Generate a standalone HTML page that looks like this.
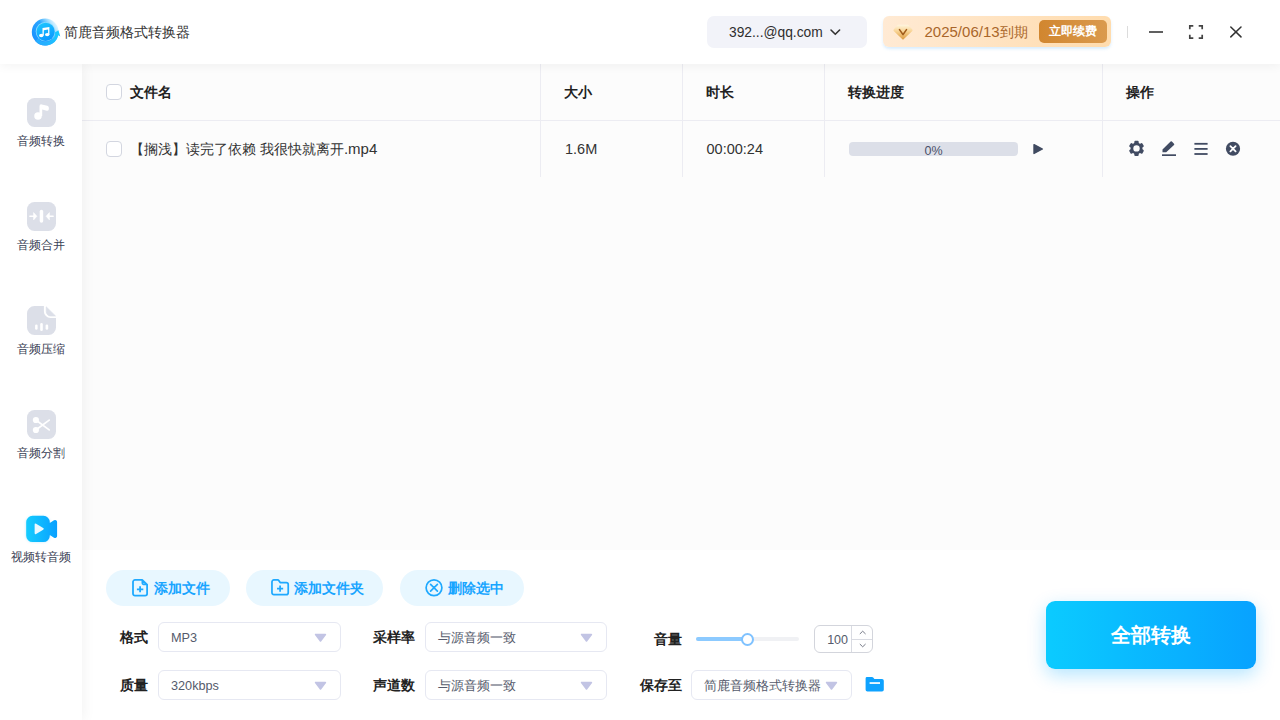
<!DOCTYPE html>
<html lang="zh">
<head>
<meta charset="utf-8">
<title>简鹿音频格式转换器</title>
<style>
*{box-sizing:border-box;margin:0;padding:0}
html,body{width:1280px;height:720px;overflow:hidden;background:#fcfcfc;font-family:"Liberation Sans",sans-serif;color:#333}
.abs{position:absolute}
svg{position:absolute;overflow:visible}
#app{position:relative;width:1280px;height:720px;overflow:hidden;background:#fcfcfc}
/* header */
#hdr{left:0;top:0;width:1280px;height:64px;background:#fff;box-shadow:0 2px 10px rgba(0,0,0,.05);z-index:5}
#title{left:64px;top:22px;font-size:14px;line-height:20px;color:#333;white-space:nowrap}
#acct{left:707px;top:16px;width:160px;height:32px;border-radius:7px;background:#f2f3f9}
#acct span{position:absolute;left:22px;top:7px;font-size:13.8px;line-height:20px;color:#2e2e2e;white-space:nowrap}
#vip{left:883px;top:16px;width:228px;height:31px;border-radius:6px;background:linear-gradient(90deg,#ffead4,#ffdcae);box-shadow:0 2px 3px rgba(170,215,250,.45)}
#vip .d{position:absolute;left:41.5px;top:5.5px;font-size:15px;line-height:20px;color:#a9662a;white-space:nowrap}
#vip .d b{font-weight:normal;font-size:14px}
#renew{left:156px;top:4px;width:68px;height:23px;border-radius:5px;background:linear-gradient(90deg,#d1862f,#da9a4e);color:#fff;font-size:12px;font-weight:bold;line-height:23px;text-align:center;white-space:nowrap}
/* sidebar */
#side{left:0;top:64px;width:82px;height:656px;background:#fff;z-index:3;box-shadow:2px 0 12px rgba(0,0,0,.05)}
.nav{left:0;width:82px;text-align:center;font-size:12px;line-height:16px;color:#3a4054;white-space:nowrap;z-index:4}
.ico{left:26.5px;width:29px;height:29px;border-radius:8px;background:#dcdfe8;z-index:4}
/* table */
#thead{left:82px;top:64px;width:1198px;height:57px;border-bottom:1px solid #ececf2}
.vsep{top:64px;width:1px;height:113px;background:#ececf2}
.th{top:83px;font-size:14px;font-weight:bold;line-height:18px;color:#222;white-space:nowrap}
.td{top:139px;font-size:14px;line-height:20px;color:#333;white-space:nowrap}
.td i{font-style:normal;font-size:15px}
.num{font-size:14.5px}
.cb{left:106px;width:16px;height:16px;border:1px solid #d3d6e0;border-radius:4px;background:#fff}
/* bottom */
#bot{left:82px;top:550px;width:1198px;height:170px;background:#fff}
.pill{top:570px;height:36px;border-radius:18px;background:#e8f7ff;color:#18a5ff;font-size:14px;font-weight:bold;line-height:36px;white-space:nowrap}
.pill span{position:absolute;top:0}
.lbl{font-size:14px;font-weight:bold;line-height:20px;color:#222;white-space:nowrap}
.sel{height:30px;border:1px solid #e6e8f2;border-radius:6px;background:#fff;font-size:13px;line-height:28px;color:#555b6c;white-space:nowrap}
.sel span{position:absolute;left:12px;top:1px}
.sel span.l{font-size:12.7px}
#go{left:1046px;top:601px;width:210px;height:68px;border-radius:9px;background:linear-gradient(90deg,#0bcbff,#08a2ff);box-shadow:0 6px 18px rgba(10,170,255,.30);color:#fff;font-size:20px;font-weight:bold;line-height:68px;text-align:center}
</style>
</head>
<body>
<div id="app">
  <div id="thead" class="abs"></div>
  <div class="abs vsep" style="left:540px"></div>
  <div class="abs vsep" style="left:682px"></div>
  <div class="abs vsep" style="left:824px"></div>
  <div class="abs vsep" style="left:1102px"></div>
  <div class="abs cb" style="top:84px"></div>
  <div class="abs th" style="left:130px">文件名</div>
  <div class="abs th" style="left:564px">大小</div>
  <div class="abs th" style="left:706px">时长</div>
  <div class="abs th" style="left:848px">转换进度</div>
  <div class="abs th" style="left:1126px">操作</div>
  <div class="abs cb" style="top:141px"></div>
  <div class="abs td" style="left:130px">【搁浅】读完了依赖 我很快就离开<i>.mp4</i></div>
  <div class="abs td num" style="left:565px">1.6M</div>
  <div class="abs td num" style="left:706.5px">00:00:24</div>
  <!-- progress -->
  <div class="abs" style="left:849px;top:142px;width:169px;height:14px;border-radius:4px;background:#dcdfe8"></div>
  <div class="abs" style="left:849px;top:144px;width:169px;text-align:center;font-size:12.5px;line-height:15px;color:#4a5068">0%</div>
  <svg style="left:1031px;top:141px" width="16" height="16" viewBox="0 0 16 16"><path d="M3 3.6 L11.4 8 L3 12.4 Z" fill="#404a60" stroke="#404a60" stroke-width="1.4" stroke-linejoin="round"/></svg>
  <!-- actions -->
  <svg style="left:1128px;top:140px" width="17" height="17" viewBox="0 0 17 17"><g transform="translate(8.5,8.4)" fill="#414b62"><circle r="5.9"/><rect x="-2.2" y="-7.6" width="4.4" height="4" rx="1.1" transform="rotate(0)"/><rect x="-2.2" y="-7.6" width="4.4" height="4" rx="1.1" transform="rotate(60)"/><rect x="-2.2" y="-7.6" width="4.4" height="4" rx="1.1" transform="rotate(120)"/><rect x="-2.2" y="-7.6" width="4.4" height="4" rx="1.1" transform="rotate(180)"/><rect x="-2.2" y="-7.6" width="4.4" height="4" rx="1.1" transform="rotate(240)"/><rect x="-2.2" y="-7.6" width="4.4" height="4" rx="1.1" transform="rotate(300)"/><circle r="3.2" fill="#fcfcfc"/></g></svg>
  <svg style="left:1160px;top:140px" width="17" height="17" viewBox="0 0 17 17"><path d="M2.5 12.2 V9.6 L10.6 1.6 a0.9 0.9 0 0 1 1.3 0 L14 3.7 a0.9 0.9 0 0 1 0 1.3 L6.2 12.2 Z" fill="#414b62"/><rect x="2" y="14.3" width="14" height="1.7" fill="#414b62"/></svg>
  <svg style="left:1193px;top:140px" width="17" height="17" viewBox="0 0 17 17"><g fill="#414b62"><rect x="1.4" y="2.9" width="13.2" height="1.8"/><rect x="1.4" y="8" width="13.2" height="1.8"/><rect x="1.4" y="13.1" width="13.2" height="1.8"/></g></svg>
  <svg style="left:1225px;top:140px" width="17" height="17" viewBox="0 0 17 17"><circle cx="8" cy="8.75" r="7.1" fill="#414b62"/><path d="M5.4 6.15 L10.6 11.35 M10.6 6.15 L5.4 11.35" stroke="#fff" stroke-width="1.8" stroke-linecap="round"/></svg>

  <div id="bot" class="abs"></div>
  <div class="abs pill" style="left:106px;width:124px"><svg style="left:26px;top:9px" width="17" height="18" viewBox="0 0 17 19" preserveAspectRatio="none"><path d="M3 1 H10.2 L15.1 5.9 V15.6 a2 2 0 0 1 -2 2 H3 a2 2 0 0 1 -2 -2 V3 a2 2 0 0 1 2 -2 Z M10.4 1.3 V4.6 a1 1 0 0 0 1 1 H14.8" fill="none" stroke="#1fa9ff" stroke-width="1.8" stroke-linejoin="round"/><path d="M4.9 10.9 H11.3 M8.1 7.7 V14.1" stroke="#1fa9ff" stroke-width="1.8"/></svg><span style="left:48px">添加文件</span></div>
  <div class="abs pill" style="left:246px;width:137px"><svg style="left:25px;top:9px" width="18.2" height="16.6" viewBox="0 0 19 17" preserveAspectRatio="none"><path d="M3 1 H7 a1.6 1.6 0 0 1 1.3 .7 L9.6 3.6 H16 a2 2 0 0 1 2 2 V14 a2 2 0 0 1 -2 2 H3 a2 2 0 0 1 -2 -2 V3 a2 2 0 0 1 2 -2 Z" fill="none" stroke="#1fa9ff" stroke-width="1.8" stroke-linejoin="round"/><path d="M6.3 9.8 H12.7 M9.5 6.6 V13" stroke="#1fa9ff" stroke-width="1.8"/></svg><span style="left:48px">添加文件夹</span></div>
  <div class="abs pill" style="left:400px;width:124px"><svg style="left:25px;top:9px" width="19" height="19" viewBox="0 0 19 19"><circle cx="9" cy="8.8" r="7.9" fill="none" stroke="#1fa9ff" stroke-width="1.7"/><path d="M5.6 5.4 L12.4 12.2 M12.4 5.4 L5.6 12.2" stroke="#1fa9ff" stroke-width="1.7" stroke-linecap="round"/></svg><span style="left:48px">删除选中</span></div>

  <div class="abs lbl" style="left:120px;top:627px">格式</div>
  <div class="abs sel" style="left:158px;top:622px;width:183px"><span class="l">MP3</span><svg style="left:155px;top:10px" width="13" height="10" viewBox="0 0 13 10"><path d="M1.6 1.5 H11.4 L6.5 8 Z" fill="#c2c4e4" stroke="#c2c4e4" stroke-width="1.6" stroke-linejoin="round"/></svg></div>
  <div class="abs lbl" style="left:120px;top:675px">质量</div>
  <div class="abs sel" style="left:158px;top:670px;width:183px"><span class="l">320kbps</span><svg style="left:155px;top:10px" width="13" height="10" viewBox="0 0 13 10"><path d="M1.6 1.5 H11.4 L6.5 8 Z" fill="#c2c4e4" stroke="#c2c4e4" stroke-width="1.6" stroke-linejoin="round"/></svg></div>
  <div class="abs lbl" style="left:373px;top:627px">采样率</div>
  <div class="abs sel" style="left:425px;top:622px;width:182px"><span>与源音频一致</span><svg style="left:154px;top:10px" width="13" height="10" viewBox="0 0 13 10"><path d="M1.6 1.5 H11.4 L6.5 8 Z" fill="#c2c4e4" stroke="#c2c4e4" stroke-width="1.6" stroke-linejoin="round"/></svg></div>
  <div class="abs lbl" style="left:373px;top:675px">声道数</div>
  <div class="abs sel" style="left:425px;top:670px;width:182px"><span>与源音频一致</span><svg style="left:154px;top:10px" width="13" height="10" viewBox="0 0 13 10"><path d="M1.6 1.5 H11.4 L6.5 8 Z" fill="#c2c4e4" stroke="#c2c4e4" stroke-width="1.6" stroke-linejoin="round"/></svg></div>
  <div class="abs lbl" style="left:654px;top:629px">音量</div>
  <div class="abs lbl" style="left:640px;top:675px">保存至</div>
  <div class="abs sel" style="left:691px;top:670px;width:161px"><span>简鹿音频格式转换器</span><svg style="left:133px;top:10px" width="13" height="10" viewBox="0 0 13 10"><path d="M1.6 1.5 H11.4 L6.5 8 Z" fill="#c2c4e4" stroke="#c2c4e4" stroke-width="1.6" stroke-linejoin="round"/></svg></div>
  <div class="abs" style="left:696px;top:637px;width:103px;height:4px;border-radius:2px;background:#f0f1f4"></div>
  <div class="abs" style="left:696px;top:637px;width:52px;height:4px;border-radius:2px;background:#8ccaff"></div>
  <div class="abs" style="left:741px;top:632.5px;width:13px;height:13px;border-radius:50%;background:#fff;border:2px solid #7fc2ff"></div>
  <div class="abs" style="left:814px;top:625px;width:59px;height:28px;border-radius:6px;border:1px solid #d3d5dc;background:#fff"></div>
  <div class="abs" style="left:851px;top:626px;width:1px;height:26px;background:#d9dbe2"></div>
  <div class="abs" style="left:852px;top:639px;width:20px;height:1px;background:#d9dbe2"></div>
  <div class="abs" style="left:815px;top:631px;width:33px;text-align:right;font-size:12.5px;line-height:18px;color:#555b6c">100</div>
  <svg style="left:858px;top:629px" width="10" height="20" viewBox="0 0 10 20"><path d="M1.8 5 L4.7 2.2 L7.6 5 M1.8 15 L4.7 17.8 L7.6 15" fill="none" stroke="#777b88" stroke-width="1"/></svg>
  <svg style="left:865px;top:676px" width="20" height="17" viewBox="0 0 20 17"><path d="M2 1 H7 a1.5 1.5 0 0 1 1.2 .6 L9.4 3 H17 a1.8 1.8 0 0 1 1.8 1.8 V13.8 a1.8 1.8 0 0 1 -1.8 1.8 H2.4 a1.8 1.8 0 0 1 -1.8 -1.8 V2.4 A1.4 1.4 0 0 1 2 1 Z" fill="#0ea2ff"/><rect x="4.6" y="6.2" width="10.4" height="1.7" fill="#fff"/></svg>
  <div id="go" class="abs">全部转换</div>

  <div id="side" class="abs"></div>
  <div id="hdr" class="abs">
    <svg style="left:30px;top:17px" width="32" height="30" viewBox="0 0 32 30"><defs><linearGradient id="lg1" x1="0.1" y1="0.75" x2="0.95" y2="0.2"><stop offset="0" stop-color="#1b93ff"/><stop offset=".5" stop-color="#2ba6ff"/><stop offset=".8" stop-color="#a8e0ff"/><stop offset="1" stop-color="#eefaff"/></linearGradient><linearGradient id="lg2" x1="0.2" y1="0" x2="0.6" y2="1"><stop offset="0" stop-color="#1cc6ff"/><stop offset="1" stop-color="#0c98ff"/></linearGradient><linearGradient id="lg3" x1="0" y1="1" x2="1" y2="0"><stop offset="0" stop-color="#2aa4ff"/><stop offset=".6" stop-color="#1cc4ff"/><stop offset="1" stop-color="#17caff"/></linearGradient></defs><circle cx="15.2" cy="15" r="13.4" fill="url(#lg1)"/><path d="M5.5 24.2 A13.4 13.4 0 0 0 28.3 18.2 L30.3 19.6 L28.4 13.2 L23.8 16.2 L25.3 16.7 A10 10 0 0 1 8 21.8 Z" fill="url(#lg3)"/><circle cx="15.4" cy="14.6" r="9.7" fill="#8adcff"/><circle cx="15.6" cy="14.8" r="9.1" fill="url(#lg2)"/><g fill="#fff"><ellipse cx="11.3" cy="18.5" rx="2.2" ry="1.7"/><ellipse cx="17.2" cy="17.6" rx="2.2" ry="1.7"/><path d="M12.5 18.6 V10.9 L19.4 9.9 V17.7 H18.1 V12.6 L13.8 13.3 V18.6 Z"/></g></svg>
    <div id="title" class="abs">简鹿音频格式转换器</div>
    <div id="acct" class="abs"><span>392...@qq.com</span><svg style="left:123px;top:13.3px" width="11" height="7" viewBox="0 0 11 7"><path d="M1 1 L5.3 5.3 L9.6 1" fill="none" stroke="#333" stroke-width="1.6" stroke-linecap="round" stroke-linejoin="round"/></svg></div>
    <div class="abs" style="left:1127px;top:26px;width:1px;height:12px;background:#dcdcdc"></div>
    <svg style="left:1145px;top:22px" width="22" height="20" viewBox="0 0 22 20"><path d="M4 10 H18" stroke="#444" stroke-width="1.7"/></svg>
    <svg style="left:1185px;top:21px" width="22" height="22" viewBox="0 0 22 22"><path d="M4.8 8.3 V4.8 H8.3 M13.7 4.8 H17.2 V8.3 M17.2 13.7 V17.2 H13.7 M8.3 17.2 H4.8 V13.7" fill="none" stroke="#444" stroke-width="1.7"/></svg>
    <svg style="left:1225px;top:21px" width="22" height="22" viewBox="0 0 22 22"><path d="M5.8 6 L16 15.9 M16 6 L5.8 15.9" stroke="#333" stroke-width="1.5" stroke-linecap="round"/></svg>
    <div id="vip" class="abs"><svg style="left:10px;top:8px" width="20" height="16" viewBox="0 0 20 16"><defs><linearGradient id="gg" x1="0" y1="0" x2="0" y2="1"><stop offset="0" stop-color="#fff6e0"/><stop offset=".45" stop-color="#f8d393"/><stop offset="1" stop-color="#dc9c44"/></linearGradient></defs><path d="M5.2 0.8 H14.8 a1.2 1.2 0 0 1 .95 .45 L19.3 5.4 a1.2 1.2 0 0 1 -.05 1.5 L10.9 15 a1.2 1.2 0 0 1 -1.8 0 L.75 6.9 a1.2 1.2 0 0 1 -.05 -1.5 L4.25 1.25 a1.2 1.2 0 0 1 .95 -.45 Z" fill="url(#gg)"/><path d="M6.5 5.6 L10 10.6 L13.5 5.6" fill="none" stroke="#a05c1c" stroke-width="1.6" stroke-linecap="round" stroke-linejoin="round"/></svg><span class="d">2025/06/13<b>到期</b></span><div id="renew" class="abs">立即续费</div></div>
  </div>
  <svg style="left:26.5px;top:98.3px;z-index:4" width="29" height="29" viewBox="0 0 29 29"><rect width="29" height="29" rx="7.5" fill="#dcdfe8"/><circle cx="11" cy="18" r="3.75" fill="#fff"/><path d="M12.5 18 V8.3 a1.9 1.9 0 0 1 2.3 -1.85 l5.5 1.25 a2 2 0 0 1 1.55 1.95 v1.4 a1.7 1.7 0 0 1 -2.1 1.65 l-4.55 -1.1 V18 z" fill="#fff"/></svg>
  <div class="abs nav" style="top:133px">音频转换</div>
  <svg style="left:26.5px;top:202.3px;z-index:4" width="29" height="29" viewBox="0 0 29 29"><rect width="29" height="29" rx="7.5" fill="#dcdfe8"/><rect x="12.7" y="7.7" width="3.5" height="13" rx="1.75" fill="#fff"/><path d="M2.9 14.25 H7.5 M26.1 14.25 H21.5" stroke="#fff" stroke-width="1.6" stroke-linecap="round"/><path d="M6.6 10.6 L9.9 14.25 L6.6 17.9 Z M22.4 10.6 L19.1 14.25 L22.4 17.9 Z" fill="#fff" stroke="#fff" stroke-width="0.6" stroke-linejoin="round"/></svg>
  <div class="abs nav" style="top:237px">音频合并</div>
  <svg style="left:26.5px;top:306.3px;z-index:4" width="29" height="29" viewBox="0 0 29 29"><path d="M7.5 0 H16.9 V5.4 a6.6 6.6 0 0 0 6.6 6.6 H29 V21.5 a7.5 7.5 0 0 1 -7.5 7.5 H7.5 a7.5 7.5 0 0 1 -7.5 -7.5 V7.5 a7.5 7.5 0 0 1 7.5 -7.5 Z" fill="#dcdfe8"/><path d="M19.3 0.9 L28.4 9.9 H23.6 a4.3 4.3 0 0 1 -4.3 -4.3 Z" fill="#dcdfe8" stroke="#dcdfe8" stroke-width="0.8" stroke-linejoin="round"/><rect x="8.1" y="18.5" width="2.5" height="5.3" rx="1.25" fill="#fff"/><rect x="13.2" y="17.1" width="2.6" height="7.9" rx="1.3" fill="#fff"/><rect x="18.6" y="18.5" width="2.6" height="5.3" rx="1.3" fill="#fff"/></svg>
  <div class="abs nav" style="top:341px">音频压缩</div>
  <svg style="left:26.5px;top:410.3px;z-index:4" width="29" height="29" viewBox="0 0 29 29"><rect width="29" height="29" rx="7.5" fill="#dcdfe8"/><circle cx="8.9" cy="10" r="3.1" fill="#fff"/><circle cx="8.9" cy="20" r="3.1" fill="#fff"/><path d="M9.5 10.5 L22.2 19.9 M9.5 19.5 L22.2 10.1" stroke="#fff" stroke-width="1.7" stroke-linecap="round"/></svg>
  <div class="abs nav" style="top:445px">音频分割</div>
  <svg style="left:20px;top:510px;z-index:4" width="44" height="40" viewBox="0 0 44 40"><defs><linearGradient id="vg" x1="0" x2="1" y1="0" y2="0"><stop offset="0" stop-color="#14ccff"/><stop offset="1" stop-color="#09a0ff"/></linearGradient><filter id="vglow" x="-30%" y="-30%" width="160%" height="160%"><feGaussianBlur stdDeviation="1.6"/></filter></defs><rect x="6" y="6.5" width="24" height="25.5" rx="6.5" fill="#8fdcff" opacity=".55" filter="url(#vglow)"/><path d="M12.5 5.8 H23.5 a6.3 6.3 0 0 1 6.3 6.3 V13 L34 10.3 a2 2 0 0 1 3.1 1.7 V26 a2 2 0 0 1 -3.1 1.7 L29.8 25 V25.7 a6.3 6.3 0 0 1 -6.3 6.3 H12.5 a6.3 6.3 0 0 1 -6.3 -6.3 V12.1 a6.3 6.3 0 0 1 6.3 -6.3 Z" fill="url(#vg)"/><path d="M14.6 14.7 a1 1 0 0 1 1.5 -0.85 L23.2 18 a1 1 0 0 1 0 1.7 L16.1 23.9 a1 1 0 0 1 -1.5 -0.85 Z" fill="#eaf8ff"/></svg>
  <div class="abs nav" style="top:549px">视频转音频</div>
</div>
</body>
</html>
